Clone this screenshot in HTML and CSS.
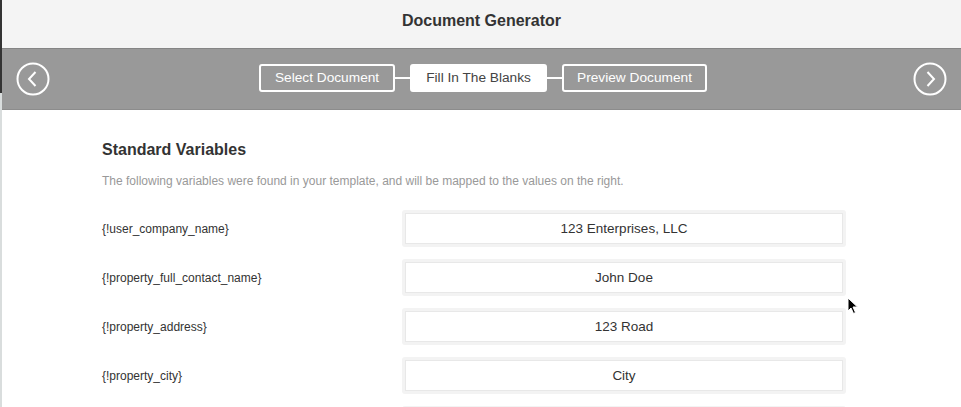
FILE: index.html
```html
<!DOCTYPE html>
<html lang="en">
<head>
    <meta charset="UTF-8">
    <title>Document Generator</title>
    <link rel="stylesheet" href="styles.css">
</head>
<body>
<div id="app">
    <div id="title-bar">Document Generator</div>

    <div id="step-bar">
        <button class="nav-circle" title="Back">
            <svg width="34" height="34" viewBox="0 0 34 34"><circle cx="17" cy="17" r="15.5" fill="none" stroke="#fff" stroke-width="2"/><path d="M19.5 10 L13 17 L19.5 24" fill="none" stroke="#fff" stroke-width="2"/></svg>
        </button>
        <div id="steps">
            <div class="step">Select Document</div>
            <div class="step-line"></div>
            <div class="step active">Fill In The Blanks</div>
            <div class="step-line"></div>
            <div class="step">Preview Document</div>
        </div>
        <button class="nav-circle" title="Next">
            <svg width="34" height="34" viewBox="0 0 34 34"><circle cx="17" cy="17" r="15.5" fill="none" stroke="#fff" stroke-width="2"/><path d="M14.5 10 L21 17 L14.5 24" fill="none" stroke="#fff" stroke-width="2"/></svg>
        </button>
    </div>

    <div id="content">
        <h2>Standard Variables</h2>
        <p class="hint">The following variables were found in your template, and will be mapped to the values on the right.</p>

        <div class="var-list">
            <div class="var-row">
                <label>{!user_company_name}</label>
                <div class="field"><input type="text" value="123 Enterprises, LLC"></div>
            </div>
            <div class="var-row">
                <label>{!property_full_contact_name}</label>
                <div class="field"><input type="text" value="John Doe"></div>
            </div>
            <div class="var-row">
                <label>{!property_address}</label>
                <div class="field"><input type="text" value="123 Road"></div>
            </div>
            <div class="var-row">
                <label>{!property_city}</label>
                <div class="field"><input type="text" value="City"></div>
            </div>
            <div class="var-row">
                <label>{!property_state}</label>
                <div class="field"><input type="text" value="State"></div>
            </div>
        </div>
    </div>

    <!-- mouse pointer -->
    <svg id="pointer" width="12" height="18" viewBox="0 0 12 18"><path d="M1 1 L1 14 L4 11 L6.5 16.5 L8.5 15.5 L6 10 L10.5 10 Z" fill="#000" stroke="#fff" stroke-width="1"/></svg>
</div>
</body>
</html>
```

FILE: styles.css
```css
html, body {
    margin: 0;
    height: 100%;
    overflow: hidden;
    background: #fff;
}

body {
    font-family: "Liberation Sans", Arial, sans-serif;
    color: #333;
}

#app {
    position: relative;
    min-height: 100%;
    border-left: 2px solid #d9dddd;
}

/* dark edge of the window behind */
#app::before {
    content: "";
    position: absolute;
    left: -2px;
    top: 0;
    width: 2px;
    height: 93px;
    background: #333;
}

#title-bar {
    height: 48px;
    line-height: 41px;
    background: #f4f4f4;
    text-align: center;
    font-size: 16px;
    font-weight: bold;
    color: #333;
}

#step-bar {
    display: flex;
    align-items: center;
    justify-content: space-between;
    height: 60px;
    padding: 0 14px;
    background: #999;
    border-top: 1px solid #858585;
    border-bottom: 1px solid #8c8c8c;
}

.nav-circle {
    width: 34px;
    height: 34px;
    padding: 0;
    border: none;
    background: none;
    cursor: pointer;
}

.nav-circle svg {
    display: block;
}

#steps {
    display: flex;
    align-items: center;
    margin-left: 3px;
    margin-top: -2px;
}

.step {
    box-sizing: border-box;
    min-width: 136px;
    height: 28px;
    line-height: 24px;
    padding: 0 13px;
    border: 2px solid #fff;
    border-radius: 3px;
    text-align: center;
    font-size: 13.7px;
    color: #fff;
}

.step.active {
    min-width: 137px;
    background: #fff;
    color: #444;
}

.step-line {
    width: 15px;
    height: 2px;
    background: #fff;
}

#content {
    padding: 31px 0 0 100px;
}

#content h2 {
    margin: 0;
    font-size: 16px;
    font-weight: bold;
    color: #333;
}

.hint {
    margin: 15px 0 0;
    font-size: 12px;
    color: #999;
}

.var-list {
    display: flex;
    flex-direction: column;
    gap: 12px;
    margin-top: 22px;
}

.var-row {
    display: grid;
    grid-template-columns: 300px 444px;
    align-items: center;
}

.var-row label {
    font-size: 12px;
    color: #333;
}

.field {
    padding: 3px;
    background: #f3f3f3;
    border-radius: 3px;
}

.field input {
    display: block;
    box-sizing: border-box;
    width: 100%;
    height: 31px;
    border: 1px solid #e8e8e8;
    background: #fff;
    text-align: center;
    font-family: "Liberation Sans", Arial, sans-serif;
    font-size: 13.5px;
    color: #333;
    outline: none;
}

#pointer {
    position: absolute;
    left: 845px;
    top: 297px;
}
```
